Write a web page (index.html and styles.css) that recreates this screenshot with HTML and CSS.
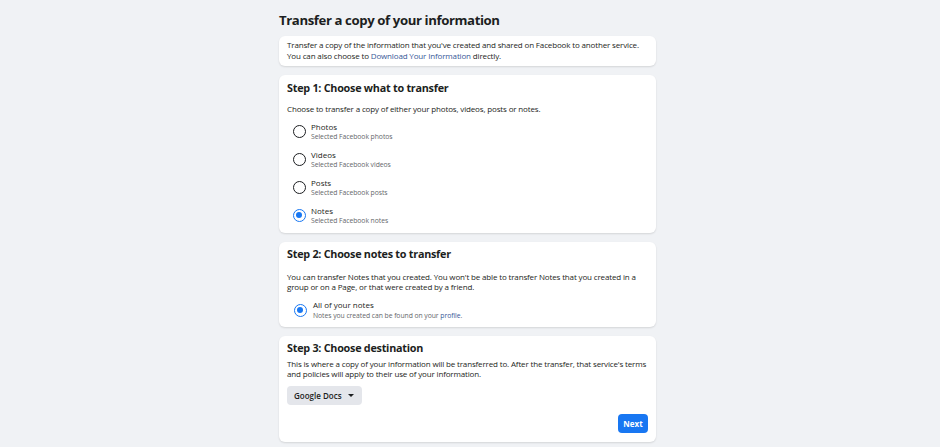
FILE: index.html
```html
<!DOCTYPE html>
<html>
<head>
<meta charset="utf-8">
<link rel="stylesheet" href="styles.css">
</head>
<body>
<main class="page">
  <h1 class="title">Transfer a copy of your information</h1>

  <section class="card intro">
    <p class="text">Transfer a copy of the information that you've created and shared on Facebook to another service.<br>You can also choose to <a class="link" href="#">Download Your Information</a> directly.</p>
  </section>

  <section class="card step1">
    <h2 class="step-title">Step 1: Choose what to transfer</h2>
    <p class="text lead">Choose to transfer a copy of either your photos, videos, posts or notes.</p>
    <ul class="options">
      <li class="option"><span class="radio"></span><div class="opt-text"><div class="opt-label">Photos</div><div class="opt-sub">Selected Facebook photos</div></div></li>
      <li class="option"><span class="radio"></span><div class="opt-text"><div class="opt-label">Videos</div><div class="opt-sub">Selected Facebook videos</div></div></li>
      <li class="option"><span class="radio"></span><div class="opt-text"><div class="opt-label">Posts</div><div class="opt-sub">Selected Facebook posts</div></div></li>
      <li class="option"><span class="radio checked"></span><div class="opt-text"><div class="opt-label">Notes</div><div class="opt-sub">Selected Facebook notes</div></div></li>
    </ul>
  </section>

  <section class="card step2">
    <h2 class="step-title">Step 2: Choose notes to transfer</h2>
    <p class="text lead">You can transfer Notes that you created. You won't be able to transfer Notes that you created in a group or on a Page, or that were created by a friend.</p>
    <div class="option single"><span class="radio checked"></span><div class="opt-text"><div class="opt-label">All of your notes</div><div class="opt-sub">Notes you created can be found on your <a class="link" href="#">profile</a>.</div></div></div>
  </section>

  <section class="card step3">
    <h2 class="step-title">Step 3: Choose destination</h2>
    <p class="text lead">This is where a copy of your information will be transferred to. After the transfer, that service's terms and policies will apply to their use of your information.</p>
    <button class="dropdown" type="button">Google Docs <span class="caret"></span></button>
    <div class="actions"><button class="next" type="button">Next</button></div>
  </section>
</main>
</body>
</html>
```

FILE: styles.css
```css
* { box-sizing: border-box; }
html, body { margin: 0; padding: 0; }
body {
  background: #f0f2f5;
  font-family: "Open Sans", "Noto Sans", "Liberation Sans", sans-serif;
  color: #1c1e21;
  padding-right: 5px;
}
.page {
  width: 377px;
  margin: 0 auto;
  padding-top: 10px;
}
.title {
  margin: 0 0 6px 0;
  font-size: 13.2px;
  font-weight: 700;
  line-height: 20px;
  letter-spacing: -0.4px;
}
.card {
  background: #fff;
  border-radius: 6px;
  box-shadow: 0 1px 2px rgba(0,0,0,0.12);
  padding: 0 8px;
  margin-bottom: 9px;
}
.intro { padding-top: 4px; height: 30px; }
.intro .text { line-height: 10.5px; }
.text {
  margin: 0;
  font-size: 8px;
  line-height: 10.3px;
  color: #1c1e21;
  letter-spacing: -0.15px;
}
.link { color: #385898; text-decoration: none; }
.step-title {
  margin: 0;
  font-size: 10.8px;
  font-weight: 700;
  line-height: 16px;
  letter-spacing: -0.25px;
}
.step1 { padding-top: 5px; height: 158px; }
.step1 .lead { margin-top: 8px; }
.options { list-style: none; margin: 7.5px 0 0 0; padding: 0 0 0 6px; display: flex; flex-direction: column; gap: 8px; }
.option { display: flex; align-items: center; gap: 5px; }
.radio {
  width: 13px; height: 13px;
  border: 1.6px solid #1c1e21;
  border-radius: 50%;
  flex: none;
  position: relative;
}
.radio.checked { border-color: #1877f2; }
.radio.checked::after {
  content: "";
  position: absolute;
  left: 2px; top: 2px;
  width: 6px; height: 6px;
  border-radius: 50%;
  background: #1877f2;
}
.opt-label { font-size: 8px; line-height: 10px; color: #1c1e21; }
.opt-sub { font-size: 6.8px; line-height: 10px; color: #65676b; letter-spacing: -0.05px; }
.step2 { padding-top: 4px; height: 85px; }
.step2 .lead { margin-top: 9.5px; }
.single { margin: 8px 0 0 7px; gap: 6px; }
.single .opt-sub { line-height: 11px; }
.step3 { padding-top: 4px; height: 106px; }
.step3 .lead { margin-top: 2.5px; }
.dropdown {
  margin-top: 6.5px;
  height: 19px;
  padding: 0 8px 0 7px;
  background: #e4e6eb;
  border: none;
  border-radius: 4px;
  font-family: inherit;
  font-size: 8px;
  font-weight: 600;
  color: #1c1e21;
  display: inline-flex;
  align-items: center;
  gap: 6px;
}
.caret {
  width: 0; height: 0;
  border-left: 3px solid transparent;
  border-right: 3px solid transparent;
  border-top: 3.5px solid #1c1e21;
}
.actions { display: flex; justify-content: flex-end; margin-top: 9px; }
.next {
  width: 30px;
  height: 19px;
  background: #1877f2;
  color: #fff;
  border: none;
  border-radius: 4px;
  font-family: inherit;
  font-size: 8px;
  font-weight: 700;
  padding: 0;
}
```
